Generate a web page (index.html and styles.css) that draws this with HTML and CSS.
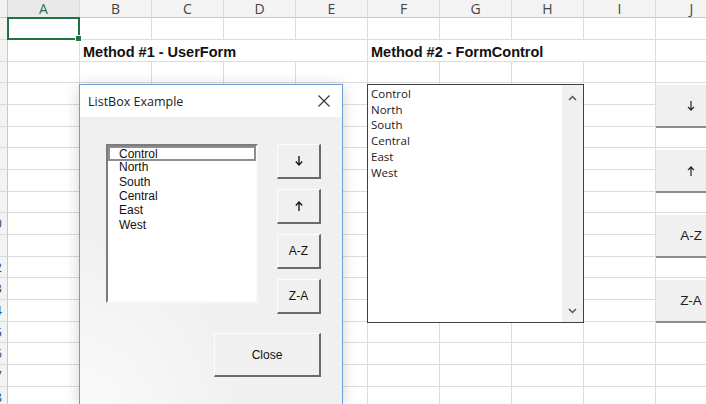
FILE: index.html
```html
<!DOCTYPE html>
<html lang="en">

<head>
  <meta charset="UTF-8">
  <meta name="viewport" content="width=device-width, initial-scale=1.0">
  <title>ListBox Example</title>
  <link rel="stylesheet" href="styles.css">
</head>

<body>
  <!-- worksheet grid, filled in by the script below -->
  <div class="sheet"></div>

  <!-- VBA UserForm -->
  <div class="dialog">
    <div class="dialog-title">
      <span>ListBox Example</span>
      <svg class="close-x" width="12" height="12" viewBox="0 0 12 12">
        <path d="M0.5 0.5 L11.5 11.5 M11.5 0.5 L0.5 11.5" stroke="#333" stroke-width="1.1" fill="none" />
      </svg>
    </div>
    <div class="dialog-body">
      <div class="dialog-content">
        <div class="dialog-row">
          <ul class="vb-list">
            <li class="focus">Control</li>
            <li>North</li>
            <li>South</li>
            <li>Central</li>
            <li>East</li>
            <li>West</li>
          </ul>
          <div class="vb-buttons">
            <button class="vb-btn">
              <svg class="arrow" width="8" height="10" viewBox="0 0 8 10">
                <path d="M4 0 V9 M0.8 5.6 L4 9 L7.2 5.6" stroke="#1a1a1a" stroke-width="1.4" fill="none" />
              </svg>
            </button>
            <button class="vb-btn">
              <svg class="arrow" width="8" height="10" viewBox="0 0 8 10">
                <path d="M4 10 V1 M0.8 4.4 L4 1 L7.2 4.4" stroke="#1a1a1a" stroke-width="1.4" fill="none" />
              </svg>
            </button>
            <button class="vb-btn">A-Z</button>
            <button class="vb-btn">Z-A</button>
          </div>
        </div>
        <button class="vb-btn close">Close</button>
      </div>
    </div>
  </div>

  <!-- form control list box on the sheet -->
  <div class="form-list">
    <ul>
      <li>Control</li>
      <li>North</li>
      <li>South</li>
      <li>Central</li>
      <li>East</li>
      <li>West</li>
    </ul>
    <div class="scroll">
      <svg width="9" height="6" viewBox="0 0 9 6">
        <path d="M1 5 L4.5 1.5 L8 5" stroke="#555" stroke-width="1.5" fill="none" />
      </svg>
      <svg width="9" height="6" viewBox="0 0 9 6">
        <path d="M1 1 L4.5 4.5 L8 1" stroke="#555" stroke-width="1.5" fill="none" />
      </svg>
    </div>
  </div>

  <!-- sheet buttons -->
  <div class="sheet-buttons">
    <button>
      <svg class="arrow" width="8" height="10" viewBox="0 0 8 10">
        <path d="M4 0 V9 M1 5.8 L4 9 L7 5.8" stroke="#222" stroke-width="1.2" fill="none" />
      </svg>
    </button>
    <button>
      <svg class="arrow" width="8" height="10" viewBox="0 0 8 10">
        <path d="M4 10 V1 M1 4.2 L4 1 L7 4.2" stroke="#222" stroke-width="1.2" fill="none" />
      </svg>
    </button>
    <button>A-Z</button>
    <button>Z-A</button>
  </div>

  <script>
    const cols = ['A', 'B', 'C', 'D', 'E', 'F', 'G', 'H', 'I', 'J']
    const rows = 18
    // text cells, they overflow into the next two columns
    const texts = {
      B2: 'Method #1 - UserForm',
      F2: 'Method #2 - FormControl'
    }

    const html = []
    // header row
    html.push('<div class="corner"></div>')
    cols.forEach(function (c) {
      html.push(`<div class="col-head ${c === 'A' ? 'active' : ''}">${c}</div>`)
    })

    for (let r = 1; r <= rows; r++) {
      html.push(`<div class="row-head"><span>${r}</span></div>`)
      let skip = 0
      cols.forEach(function (c) {
        if (skip > 0) {
          skip--
          return
        }
        const key = c + r
        if (texts[key]) {
          html.push(`<div class="cell span3">${texts[key]}</div>`)
          skip = 2
        } else if (key === 'A1') {
          html.push('<div class="cell selected"></div>')
        } else {
          html.push('<div class="cell"></div>')
        }
      })
    }

    document.querySelector('.sheet').innerHTML = html.join('')
  </script>
</body>

</html>
```

FILE: styles.css
```css
body {
  margin: 0;
  width: 706px;
  height: 404px;
  overflow: hidden;
  background: #fff;
  font-family: "Liberation Sans", Arial, sans-serif;
}

ul {
  margin: 0;
  padding: 0;
  list-style: none;
}

button {
  font-family: "Liberation Sans", Arial, sans-serif;
  color: #111;
  padding: 0;
}

.arrow {
  display: block;
  margin: 0 auto;
}

/* ---------- sheet ---------- */

.sheet {
  display: grid;
  grid-template-columns: 8px repeat(10, 72px);
  grid-template-rows: 18px repeat(6, 22px 22px 21px);
  height: 404px;
  overflow: hidden;
}

.corner {
  background: #f2f2f2;
  border-right: 1px solid #c8c8c8;
  border-bottom: 1px solid #c8c8c8;
}

.col-head {
  background: #f3f3f3;
  border-right: 1px solid #dadada;
  border-bottom: 1px solid #c8c8c8;
  text-align: center;
  font-family: "Open Sans", sans-serif;
  font-size: 14px;
  line-height: 17px;
  color: #444;
}

.col-head.active {
  background: #e9e9e9;
  color: #217346;
}

.row-head {
  background: #f3f3f3;
  border-right: 1px solid #c8c8c8;
  border-bottom: 1px solid #dadada;
  overflow: hidden;
}

.row-head span {
  display: block;
  width: 26px;
  margin-left: -18.5px;
  text-align: center;
  font-family: "Open Sans", sans-serif;
  font-size: 13px;
  line-height: 21px;
  color: #2f4a6a;
}

.cell {
  border-right: 1px solid #dcdcdc;
  border-bottom: 1px solid #dcdcdc;
}

.span3 {
  grid-column: span 3;
  border-right: none;
  padding: 3px 0 0 3px;
  font-weight: bold;
  font-size: 14.5px;
  line-height: 18px;
  color: #111;
  white-space: nowrap;
}

.selected {
  position: relative;
}

.selected::before {
  content: "";
  position: absolute;
  top: -1px;
  left: -1px;
  right: -1px;
  bottom: -1px;
  border: 2px solid #217346;
}

.selected::after {
  content: "";
  position: absolute;
  right: -3px;
  bottom: -3px;
  width: 5px;
  height: 5px;
  background: #217346;
  border: 1px solid #fff;
}

/* ---------- user form ---------- */

.dialog {
  position: absolute;
  left: 79px;
  top: 84px;
  width: 264px;
  height: 321px;
  box-sizing: border-box;
  border: 1px solid #6e9fd6;
  background: #f0f0f0;
  box-shadow: 0 2px 14px rgba(0, 0, 0, 0.18);
  overflow: hidden;
}

.dialog-title {
  height: 32px;
  background: #fff;
  display: flex;
  align-items: center;
  justify-content: space-between;
  padding: 0 12px 0 8px;
  font-family: "Open Sans", sans-serif;
  font-size: 12.5px;
  color: #222;
}

.dialog-body {
  height: 100%;
  padding: 27px 0 0 26px;
  background: radial-gradient(ellipse at 0% 90%, #fbfbfb 0%, #f0f0f0 45%);
}

.dialog-content {
  width: 215px;
  display: flex;
  flex-direction: column;
}

.dialog-row {
  display: flex;
  gap: 19px;
}

.vb-list {
  width: 152px;
  height: 159px;
  box-sizing: border-box;
  border: 2px solid;
  border-color: #7c7c7c #f8f8f8 #f8f8f8 #7c7c7c;
  background: #fff;
  font-size: 12px;
  color: #111;
}

.vb-list li {
  height: 14.3px;
  line-height: 14.3px;
  padding-left: 11px;
}

.vb-list li.focus {
  box-shadow: inset 0 0 0 2px #8e8e8e;
  height: 15px;
  line-height: 16px;
  margin-bottom: -0.7px;
}

.vb-buttons {
  display: flex;
  flex-direction: column;
  gap: 10px;
}

.vb-btn {
  width: 44px;
  height: 35px;
  box-sizing: border-box;
  background: #f0f0f0;
  border-style: solid;
  border-width: 1px 2px 2px 1px;
  border-color: #fdfdfd #6a6a6a #6a6a6a #fdfdfd;
  font-size: 12px;
}

.vb-btn.close {
  align-self: flex-end;
  width: 107px;
  height: 44px;
  margin-top: 19px;
}

/* ---------- form control list ---------- */

.form-list {
  position: absolute;
  left: 367px;
  top: 84px;
  width: 217px;
  height: 239px;
  box-sizing: border-box;
  border: 1px solid #404040;
  background: #fff;
  display: flex;
}

.form-list ul {
  flex: 1;
  padding: 1px 0 0 3px;
  font-family: "Open Sans", sans-serif;
  font-size: 11.5px;
  color: #1a1a1a;
}

.form-list li {
  line-height: 15.7px;
}

.scroll {
  width: 21px;
  background: #f0f0f0;
  display: flex;
  flex-direction: column;
  align-items: center;
  justify-content: space-between;
  padding: 10px 0 8px;
}

/* ---------- sheet buttons ---------- */

.sheet-buttons {
  position: absolute;
  left: 656px;
  top: 85px;
  display: flex;
  flex-direction: column;
  gap: 22px;
}

.sheet-buttons button {
  width: 70px;
  height: 43px;
  box-sizing: border-box;
  border: none;
  border-bottom: 2px solid #8c8c8c;
  background: #f0f0f0;
  font-size: 13.5px;
  color: #222;
}
```
